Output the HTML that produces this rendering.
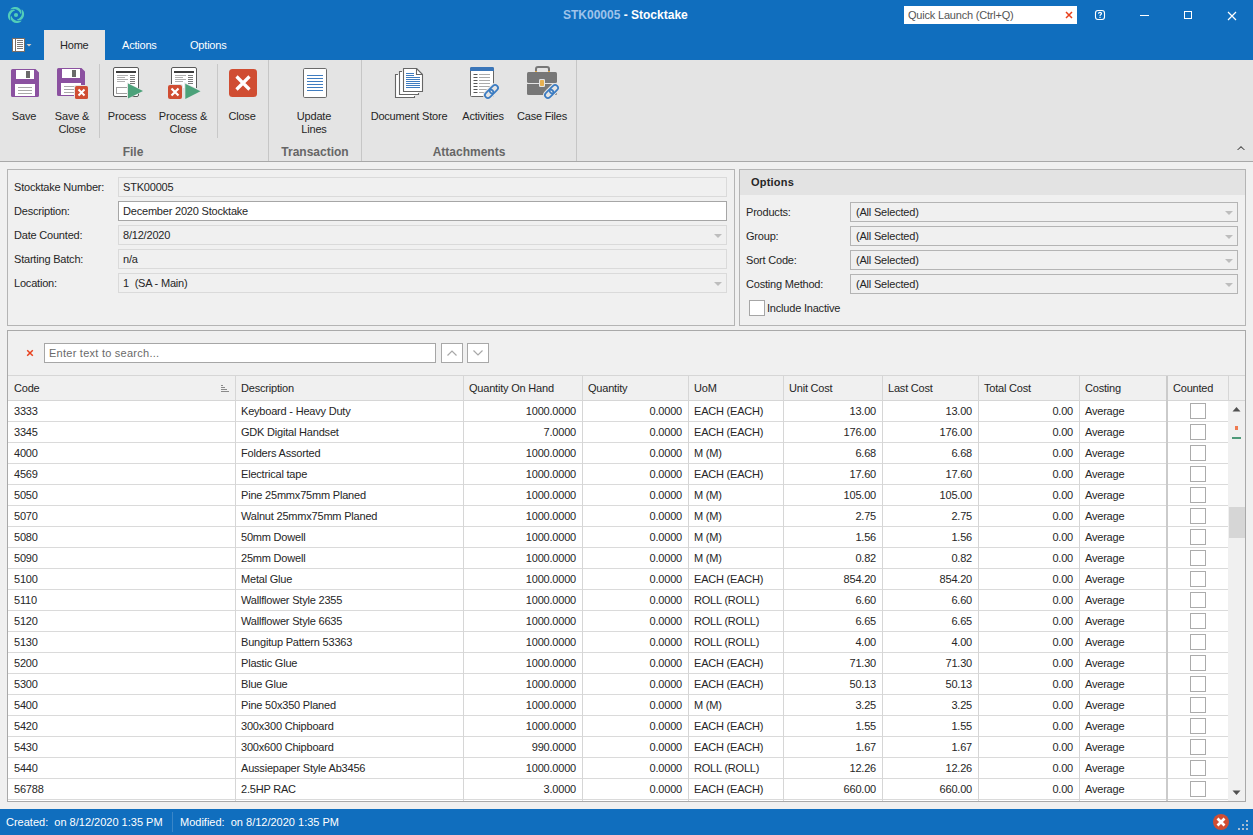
<!DOCTYPE html>
<html><head><meta charset="utf-8">
<style>
*{box-sizing:border-box;margin:0;padding:0}
html,body{width:1253px;height:835px;overflow:hidden;background:#f0f0f0;font-family:"Liberation Sans",sans-serif;font-size:11px;color:#222;letter-spacing:-0.2px}
.a{position:absolute}
.t{position:absolute;white-space:nowrap;line-height:13px}
#title{left:0;top:0;width:1253px;height:60px;background:#106ebe}
#ribbon{left:0;top:60px;width:1253px;height:102px;background:#e4e4e4;border-bottom:1px solid #a8a8a8}
.sep{position:absolute;width:1px;background:#c8c8c8}
.gdiv{position:absolute;top:60px;height:101px;width:1px;background:#c6c6c6}
.lbl{position:absolute;white-space:nowrap;line-height:13px;text-align:center;color:#262626}
.glbl{position:absolute;white-space:nowrap;line-height:14px;text-align:center;color:#666;font-weight:bold;font-size:12px;letter-spacing:0}
.box{position:absolute;height:20px;border:1px solid #dadada;background:#f0f0f0}
.dd{position:absolute;width:0;height:0;border-left:4px solid transparent;border-right:4px solid transparent;border-top:4px solid #bdbdbd}
.r{text-align:right}
.fl{position:absolute;white-space:nowrap;line-height:13px;color:#262626;margin-top:1px}
</style></head><body>
<div id="title" class="a"></div>
<!-- logo -->
<svg class="a" style="left:6px;top:5px" width="20" height="20" viewBox="0 0 20 20">
 <g fill="#52cdb9"><path d="M4.41 4.41 L4.78 3.73 L5.33 3.23 L5.95 2.81 L6.62 2.47 L7.32 2.21 L8.05 2.03 L8.79 1.93 L9.53 1.92 L10.26 1.99 L10.98 2.14 L11.66 2.36 L12.32 2.66 L12.92 3.02 L13.48 3.44 L13.97 3.92 L14.40 4.44 L14.76 4.99 L15.04 5.58 L15.25 6.18 L15.37 6.79 L15.41 7.40 L15.37 8.00 L15.22 8.58 L14.83 9.15 L14.83 9.15 L14.48 8.78 L14.29 8.40 L14.10 8.03 L13.90 7.67 L13.69 7.32 L13.45 6.97 L13.20 6.63 L12.92 6.31 L12.62 5.99 L12.28 5.69 L11.92 5.40 L11.53 5.14 L11.11 4.89 L10.66 4.66 L10.18 4.47 L9.67 4.30 L9.12 4.17 L8.55 4.08 L7.95 4.03 L7.32 4.03 L6.67 4.08 L5.99 4.18 L5.27 4.32 L4.41 4.41Z"/><path d="M15.59 4.41 L16.27 4.78 L16.77 5.33 L17.19 5.95 L17.53 6.62 L17.79 7.32 L17.97 8.05 L18.07 8.79 L18.08 9.53 L18.01 10.26 L17.86 10.98 L17.64 11.66 L17.34 12.32 L16.98 12.92 L16.56 13.48 L16.08 13.97 L15.56 14.40 L15.01 14.76 L14.42 15.04 L13.82 15.25 L13.21 15.37 L12.60 15.41 L12.00 15.37 L11.42 15.22 L10.85 14.83 L10.85 14.83 L11.22 14.48 L11.60 14.29 L11.97 14.10 L12.33 13.90 L12.68 13.69 L13.03 13.45 L13.37 13.20 L13.69 12.92 L14.01 12.62 L14.31 12.28 L14.60 11.92 L14.86 11.53 L15.11 11.11 L15.34 10.66 L15.53 10.18 L15.70 9.67 L15.83 9.12 L15.92 8.55 L15.97 7.95 L15.97 7.32 L15.92 6.67 L15.82 5.99 L15.68 5.27 L15.59 4.41Z"/><path d="M15.59 15.59 L15.22 16.27 L14.67 16.77 L14.05 17.19 L13.38 17.53 L12.68 17.79 L11.95 17.97 L11.21 18.07 L10.47 18.08 L9.74 18.01 L9.02 17.86 L8.34 17.64 L7.68 17.34 L7.08 16.98 L6.52 16.56 L6.03 16.08 L5.60 15.56 L5.24 15.01 L4.96 14.42 L4.75 13.82 L4.63 13.21 L4.59 12.60 L4.63 12.00 L4.78 11.42 L5.17 10.85 L5.17 10.85 L5.52 11.22 L5.71 11.60 L5.90 11.97 L6.10 12.33 L6.31 12.68 L6.55 13.03 L6.80 13.37 L7.08 13.69 L7.38 14.01 L7.72 14.31 L8.08 14.60 L8.47 14.86 L8.89 15.11 L9.34 15.34 L9.82 15.53 L10.33 15.70 L10.88 15.83 L11.45 15.92 L12.05 15.97 L12.68 15.97 L13.33 15.92 L14.01 15.82 L14.73 15.68 L15.59 15.59Z"/><path d="M4.41 15.59 L3.73 15.22 L3.23 14.67 L2.81 14.05 L2.47 13.38 L2.21 12.68 L2.03 11.95 L1.93 11.21 L1.92 10.47 L1.99 9.74 L2.14 9.02 L2.36 8.34 L2.66 7.68 L3.02 7.08 L3.44 6.52 L3.92 6.03 L4.44 5.60 L4.99 5.24 L5.58 4.96 L6.18 4.75 L6.79 4.63 L7.40 4.59 L8.00 4.63 L8.58 4.78 L9.15 5.17 L9.15 5.17 L8.78 5.52 L8.40 5.71 L8.03 5.90 L7.67 6.10 L7.32 6.31 L6.97 6.55 L6.63 6.80 L6.31 7.08 L5.99 7.38 L5.69 7.72 L5.40 8.08 L5.14 8.47 L4.89 8.89 L4.66 9.34 L4.47 9.82 L4.30 10.33 L4.17 10.88 L4.08 11.45 L4.03 12.05 L4.03 12.68 L4.08 13.33 L4.18 14.01 L4.32 14.73 L4.41 15.59Z"/></g>
 <circle cx="10" cy="10" r="2.1" fill="#52cdb9"/>
</svg>
<div class="t" style="left:563px;top:9px;font-size:12px;font-weight:bold;color:#9fc3ea;letter-spacing:0">STK00005 <span style="color:#fff">- Stocktake</span></div>
<!-- quick launch -->
<div class="a" style="left:904px;top:6px;width:173px;height:18px;background:#fff"></div>
<div class="t" style="left:908px;top:9px;color:#555">Quick Launch (Ctrl+Q)</div>
<svg class="a" style="left:1065px;top:11px" width="8" height="8" viewBox="0 0 8 8"><path d="M1 1L7 7M7 1L1 7" stroke="#e8401c" stroke-width="1.5"/></svg>
<!-- help -->
<svg class="a" style="left:1094px;top:9px" width="12" height="12" viewBox="0 0 12 12"><rect x="1.5" y="1.5" width="9" height="9" rx="2.5" fill="none" stroke="#fff" stroke-width="1.1"/><path d="M4.5 4.8Q4.5 3.3 6 3.3Q7.5 3.3 7.5 4.6Q7.5 5.4 6.6 5.8Q6 6.1 6 7" fill="none" stroke="#fff" stroke-width="1.2"/><rect x="5.4" y="7.8" width="1.2" height="1.2" fill="#fff"/></svg>
<div class="a" style="left:1140px;top:15px;width:9px;height:1px;background:#fff"></div>
<div class="a" style="left:1184px;top:11px;width:8px;height:8px;border:1px solid #fff"></div>
<svg class="a" style="left:1227px;top:11px" width="10" height="10" viewBox="0 0 10 10"><path d="M1 1L9 9M9 1L1 9" stroke="#fff" stroke-width="1.2"/></svg>
<!-- tabs -->
<svg class="a" style="left:12px;top:38px" width="22" height="14" viewBox="0 0 22 14"><rect x="0.5" y="0.5" width="12" height="13" fill="#fff" stroke="#7a6e66"/><rect x="3" y="1" width="1" height="12" fill="#7a6e66"/><path d="M5 2.5h6M5 4.5h6M5 6.5h6M5 8.5h6M5 10.5h6" stroke="#6e6a68" stroke-width="0.9"/><path d="M14.5 6h5l-2.5 2.5z" fill="#d8ccc4"/></svg>
<div class="a" style="left:44px;top:30px;width:61px;height:31px;background:#e4e4e4"></div>
<div class="t" style="left:60px;top:39px;color:#262626">Home</div>
<div class="t" style="left:122px;top:39px;color:#fff">Actions</div>
<div class="t" style="left:190px;top:39px;color:#fff">Options</div>

<div id="ribbon" class="a"></div>

<div class="sep" style="left:99px;top:64px;height:74px"></div>
<div class="sep" style="left:217px;top:64px;height:74px"></div>
<div class="gdiv" style="left:268px"></div>
<div class="gdiv" style="left:361px"></div>
<div class="gdiv" style="left:576px"></div>
<!-- Save -->
<svg class="a" style="left:11px;top:69px" width="28" height="28" viewBox="0 0 28 28">
 <path d="M1.5 0H24.5L28 3.5V26.5A1.5 1.5 0 0 1 26.5 28H1.5A1.5 1.5 0 0 1 0 26.5V1.5A1.5 1.5 0 0 1 1.5 0Z" fill="#8b51a0"/>
 <rect x="5" y="1" width="18" height="9" fill="#fff"/>
 <rect x="15" y="2" width="4" height="7" fill="#6a6a6a"/>
 <rect x="4" y="15" width="20" height="12" fill="#fff"/>
 <path d="M7 18.5H21M7 21.5H21M7 24.5H21" stroke="#a8a8a8" stroke-width="1"/>
</svg>
<!-- Save & Close -->
<svg class="a" style="left:57px;top:68px" width="32" height="32" viewBox="0 0 32 32">
 <path d="M1.5 0H24.5L28 3.5V26.5A1.5 1.5 0 0 1 26.5 28H1.5A1.5 1.5 0 0 1 0 26.5V1.5A1.5 1.5 0 0 1 1.5 0Z" fill="#8b51a0"/>
 <rect x="5" y="1" width="18" height="9" fill="#fff"/>
 <rect x="15" y="2" width="4" height="7" fill="#6a6a6a"/>
 <rect x="4" y="15" width="20" height="12" fill="#fff"/>
 <path d="M7 18.5H21M7 21.5H21M7 24.5H21" stroke="#a8a8a8" stroke-width="1"/>
 <rect x="17" y="17" width="15" height="15" rx="2" fill="#e4e4e4"/>
 <rect x="18" y="18" width="13" height="13" rx="1.5" fill="#d04d32"/>
 <path d="M21.5 21.5L27.5 27.5M27.5 21.5L21.5 27.5" stroke="#fff" stroke-width="2"/>
</svg>
<!-- Process -->
<svg class="a" style="left:112px;top:66px" width="34" height="34" viewBox="0 0 34 34">
 <rect x="1.5" y="1.5" width="25" height="29" rx="1.5" fill="#fff" stroke="#5a5a5a" stroke-width="1"/>
 <rect x="4" y="5" width="20" height="2" fill="#3c3c3c"/>
 <path d="M5 9.5H16M5 11.5H13M5 13.5H16M5 15.5H13" stroke="#b0b0b0" stroke-width="1"/>
 <path d="M18 9.5H23M18 11.5H23M18 13.5H23M18 15.5H23M18 17.5H23" stroke="#7a7a7a" stroke-width="1"/>
 <rect x="4.5" y="21.5" width="12" height="6" fill="#fff" stroke="#a0a0a0"/>
 <path d="M15 16.5L32 25L15 33.5Z" fill="#e4e4e4"/>
 <path d="M16 17.5L31 25L16 32.5Z" fill="#4ca27a"/>
</svg>
<!-- Process & Close -->
<svg class="a" style="left:165px;top:64px" width="38" height="38" viewBox="0 0 38 38">
 <defs><clipPath id="cp1"><rect x="0" y="0" width="38" height="24"/></clipPath></defs>
 <rect x="6.5" y="3.5" width="25" height="30" rx="1.5" fill="#fff" stroke="#5a5a5a" stroke-width="1" clip-path="url(#cp1)"/>
 <rect x="9" y="7" width="20" height="2" fill="#3c3c3c"/>
 <path d="M10 11.5H21M10 13.5H18M10 15.5H21M10 17.5H18" stroke="#b0b0b0" stroke-width="1"/>
 <path d="M23 11.5H28M23 13.5H28M23 15.5H28M23 17.5H28M23 19.5H28" stroke="#7a7a7a" stroke-width="1"/>
 <rect x="2" y="20" width="16" height="16" rx="2.5" fill="#e4e4e4"/>
 <rect x="3" y="21" width="14" height="14" rx="2" fill="#d04d32"/>
 <path d="M6.5 24.5L13.5 31.5M13.5 24.5L6.5 31.5" stroke="#fff" stroke-width="2.2"/>
 <path d="M19.3 18.3L37 27.2L19.3 36Z" fill="#e4e4e4"/>
 <path d="M20.3 19.8L35.5 27.3L20.3 35Z" fill="#4ca27a"/>
</svg>
<!-- Close -->
<svg class="a" style="left:229px;top:69px" width="28" height="28" viewBox="0 0 28 28">
 <rect x="0" y="0" width="28" height="28" rx="3.5" fill="#d04d32"/>
 <path d="M7.5 7.5L20.5 20.5M20.5 7.5L7.5 20.5" stroke="#fff" stroke-width="3.2"/>
</svg>
<!-- Update Lines -->
<svg class="a" style="left:303px;top:68px" width="24" height="30" viewBox="0 0 24 30">
 <rect x="0.5" y="0.5" width="23" height="29" rx="1.2" fill="#fff" stroke="#6a6a6a" stroke-width="1"/>
 <path d="M4 7.5H20M4 10.5H20M4 13.5H20M4 16.5H20M4 19.5H20M4 22.5H20" stroke="#3f7cc0" stroke-width="1"/>
</svg>
<!-- Document Store -->
<svg class="a" style="left:385px;top:62px" width="45" height="40" viewBox="0 0 45 40">
 <rect x="10.5" y="12.5" width="19" height="23" fill="#fff"/>
 <rect x="14.5" y="9.5" width="19" height="23" fill="#fff"/>
 <path d="M13 12.5H10.5V35.5H29.5V34" fill="none" stroke="#666" stroke-width="1.1"/>
 <path d="M17 9.5H14.5V32.5H33.5V31" fill="none" stroke="#666" stroke-width="1.1"/>
 <path d="M18.5 6.5H31.5L37.5 12.5V29.5H18.5Z" fill="#fff" stroke="#666" stroke-width="1.1" stroke-linejoin="round"/>
 <path d="M31.5 6.5V12.5H37.5" fill="none" stroke="#666" stroke-width="1.1"/>
 <path d="M21 11.5H29M21 13.5H29M21 15.5H35M21 17.5H35M21 19.5H35M21 21.5H35M21 23.5H35M21 25.5H35" stroke="#3f7cc0" stroke-width="1"/>
</svg>
<!-- Activities -->
<svg class="a" style="left:465px;top:62px" width="40" height="40" viewBox="0 0 40 40">
 <rect x="5.5" y="5.5" width="23" height="29" rx="1" fill="#fff" stroke="#666"/>
 <path d="M5 9V6.5A1.5 1.5 0 0 1 6.5 5H27.5A1.5 1.5 0 0 1 29 6.5V9Z" fill="#3a76b9"/>
 <path d="M8.5 12.5H12.5M8.5 15.5H12.5M8.5 18.5H12.5M8.5 21.5H12.5M8.5 24.5H12.5M8.5 27.5H12.5M8.5 30.5H12.5" stroke="#555" stroke-width="1"/>
 <path d="M14 12.5H25M14 15.5H25M14 18.5H25M14 21.5H25M14 24.5H25M14 27.5H25M14 30.5H25" stroke="#ababab" stroke-width="1"/>
 <g transform="translate(26.5,29.5) rotate(-45)">
  <rect x="-8" y="-2.9" width="9.5" height="5.8" rx="2.9" fill="#e4e4e4" stroke="#e4e4e4" stroke-width="4"/>
  <rect x="-1.5" y="-2.9" width="9.5" height="5.8" rx="2.9" fill="#e4e4e4" stroke="#e4e4e4" stroke-width="4"/>
  <rect x="-8" y="-2.9" width="9.5" height="5.8" rx="2.9" fill="none" stroke="#3b7cc2" stroke-width="1.7"/>
  <rect x="-1.5" y="-2.9" width="9.5" height="5.8" rx="2.9" fill="none" stroke="#3b7cc2" stroke-width="1.7"/>
 </g>
</svg>
<!-- Case Files -->
<svg class="a" style="left:520px;top:62px" width="40" height="40" viewBox="0 0 40 40">
 <path d="M16 10V7A2 2 0 0 1 18 5H27A2 2 0 0 1 29 7V10" fill="none" stroke="#777" stroke-width="2"/>
 <rect x="15" y="9" width="2" height="1" fill="#e0a848"/>
 <rect x="28" y="9" width="2" height="1" fill="#e0a848"/>
 <path d="M7 11.5A1.5 1.5 0 0 1 8.5 10H35.5A1.5 1.5 0 0 1 37 11.5V19.5A1.5 1.5 0 0 1 35.5 21H8.5A1.5 1.5 0 0 1 7 19.5Z" fill="#777"/>
 <path d="M7 22H37V31.5A1.5 1.5 0 0 1 35.5 33H8.5A1.5 1.5 0 0 1 7 31.5Z" fill="#777"/>
 <rect x="19" y="17" width="6" height="8" rx="1.2" fill="#e4e4e4"/>
 <rect x="20" y="18" width="4" height="6" rx="0.8" fill="#e6b050"/>
 <g transform="translate(31.5,29.5) rotate(-45)">
  <rect x="-8" y="-2.9" width="9.5" height="5.8" rx="2.9" fill="#e4e4e4" stroke="#e4e4e4" stroke-width="4"/>
  <rect x="-1.5" y="-2.9" width="9.5" height="5.8" rx="2.9" fill="#e4e4e4" stroke="#e4e4e4" stroke-width="4"/>
  <rect x="-8" y="-2.9" width="9.5" height="5.8" rx="2.9" fill="none" stroke="#3b7cc2" stroke-width="1.7"/>
  <rect x="-1.5" y="-2.9" width="9.5" height="5.8" rx="2.9" fill="none" stroke="#3b7cc2" stroke-width="1.7"/>
 </g>
</svg>
<!-- labels -->
<div class="lbl" style="left:-6px;top:110px;width:60px">Save</div>
<div class="lbl" style="left:42px;top:110px;width:60px">Save &amp;<br>Close</div>
<div class="lbl" style="left:97px;top:110px;width:60px">Process</div>
<div class="lbl" style="left:148px;top:110px;width:70px">Process &amp;<br>Close</div>
<div class="lbl" style="left:212px;top:110px;width:60px">Close</div>
<div class="lbl" style="left:284px;top:110px;width:60px">Update<br>Lines</div>
<div class="lbl" style="left:364px;top:110px;width:90px">Document Store</div>
<div class="lbl" style="left:453px;top:110px;width:60px">Activities</div>
<div class="lbl" style="left:512px;top:110px;width:60px">Case Files</div>
<div class="glbl" style="left:103px;top:145px;width:60px">File</div>
<div class="glbl" style="left:269px;top:145px;width:92px">Transaction</div>
<div class="glbl" style="left:419px;top:145px;width:100px">Attachments</div>
<svg class="a" style="left:1236px;top:144px" width="10" height="7" viewBox="0 0 10 7"><path d="M1 6L5 2L9 6L8 6L5 3.4L2 6Z" fill="#444"/></svg>

<!-- left form panel -->
<div class="a" style="left:7px;top:169px;width:728px;height:157px;border:1px solid #b4b4b4;background:#f0f0f0"></div>
<div class="fl" style="left:14px;top:180px">Stocktake Number:</div>
<div class="fl" style="left:14px;top:204px">Description:</div>
<div class="fl" style="left:14px;top:228px">Date Counted:</div>
<div class="fl" style="left:14px;top:252px">Starting Batch:</div>
<div class="fl" style="left:14px;top:276px">Location:</div>
<div class="box" style="left:118px;top:177px;width:609px"></div>
<div class="box" style="left:118px;top:201px;width:609px;background:#fff;border-color:#a6a6a6"></div>
<div class="box" style="left:118px;top:225px;width:609px"></div>
<div class="box" style="left:118px;top:249px;width:609px"></div>
<div class="box" style="left:118px;top:273px;width:609px"></div>
<div class="fl" style="left:123px;top:180px">STK00005</div>
<div class="fl" style="left:123px;top:204px">December 2020 Stocktake</div>
<div class="fl" style="left:123px;top:228px">8/12/2020</div>
<div class="fl" style="left:123px;top:252px">n/a</div>
<div class="fl" style="left:123px;top:276px">1&nbsp; (SA - Main)</div>
<div class="dd" style="left:714px;top:234px"></div>
<div class="dd" style="left:714px;top:282px"></div>
<!-- options panel -->
<div class="a" style="left:739px;top:169px;width:507px;height:157px;border:1px solid #b4b4b4;background:#f0f0f0"></div>
<div class="a" style="left:740px;top:170px;width:505px;height:25px;background:#e3e3e3"></div>
<div class="fl" style="left:751px;top:175px;font-weight:bold;letter-spacing:0.2px">Options</div>
<div class="fl" style="left:746px;top:205px">Products:</div>
<div class="fl" style="left:746px;top:229px">Group:</div>
<div class="fl" style="left:746px;top:253px">Sort Code:</div>
<div class="fl" style="left:746px;top:277px">Costing Method:</div>
<div class="box" style="left:850px;top:202px;width:388px;border-color:#b4b4b4"></div>
<div class="box" style="left:850px;top:226px;width:388px;border-color:#b4b4b4"></div>
<div class="box" style="left:850px;top:250px;width:388px;border-color:#b4b4b4"></div>
<div class="box" style="left:850px;top:274px;width:388px;border-color:#b4b4b4"></div>
<div class="fl" style="left:856px;top:205px">(All Selected)</div>
<div class="fl" style="left:856px;top:229px">(All Selected)</div>
<div class="fl" style="left:856px;top:253px">(All Selected)</div>
<div class="fl" style="left:856px;top:277px">(All Selected)</div>
<div class="dd" style="left:1225px;top:211px"></div>
<div class="dd" style="left:1225px;top:235px"></div>
<div class="dd" style="left:1225px;top:259px"></div>
<div class="dd" style="left:1225px;top:283px"></div>
<div class="a" style="left:749px;top:300px;width:16px;height:16px;border:1px solid #a6a6a6;background:#fff"></div>
<div class="fl" style="left:767px;top:301px">Include Inactive</div>
<div class="a" style="left:7px;top:330px;width:1239px;height:472px;border:1px solid #a9a9a9;background:#f0f0f0"></div>
<svg class="a" style="left:26px;top:349px" width="8" height="8" viewBox="0 0 8 8"><path d="M1.2 1.2L6.8 6.8M6.8 1.2L1.2 6.8" stroke="#e8401c" stroke-width="1.5"/></svg>
<div class="a" style="left:44px;top:343px;width:392px;height:20px;border:1px solid #a6a6a6;background:#fff"></div>
<div class="fl" style="left:49px;top:346px;color:#6a6a6a;letter-spacing:0.25px">Enter text to search...</div>
<div class="a" style="left:441px;top:343px;width:22px;height:20px;border:1px solid #a8a8a8;background:#fff"></div>
<div class="a" style="left:467px;top:343px;width:22px;height:20px;border:1px solid #a8a8a8;background:#fff"></div>
<svg class="a" style="left:446px;top:348px" width="12" height="10" viewBox="0 0 12 10"><path d="M1.5 7.5L6 3L10.5 7.5" fill="none" stroke="#a8a8a8" stroke-width="1.2"/></svg>
<svg class="a" style="left:472px;top:348px" width="12" height="10" viewBox="0 0 12 10"><path d="M1.5 2.5L6 7L10.5 2.5" fill="none" stroke="#a8a8a8" stroke-width="1.2"/></svg>
<div class="a" style="left:8px;top:375px;width:1237px;height:1px;background:#d6d6d6"></div>
<div class="a" style="left:8px;top:400px;width:1237px;height:1px;background:#d6d6d6"></div>
<div class="a" style="left:8px;top:401px;width:1220px;height:400px;background:#fff"></div>
<div class="a" style="left:1228px;top:401px;width:17px;height:400px;background:#f0f0f0"></div>
<div class="a" style="left:8px;top:421px;width:1220px;height:1px;background:#dadada"></div>
<div class="a" style="left:8px;top:442px;width:1220px;height:1px;background:#dadada"></div>
<div class="a" style="left:8px;top:463px;width:1220px;height:1px;background:#dadada"></div>
<div class="a" style="left:8px;top:484px;width:1220px;height:1px;background:#dadada"></div>
<div class="a" style="left:8px;top:505px;width:1220px;height:1px;background:#dadada"></div>
<div class="a" style="left:8px;top:526px;width:1220px;height:1px;background:#dadada"></div>
<div class="a" style="left:8px;top:547px;width:1220px;height:1px;background:#dadada"></div>
<div class="a" style="left:8px;top:568px;width:1220px;height:1px;background:#dadada"></div>
<div class="a" style="left:8px;top:589px;width:1220px;height:1px;background:#dadada"></div>
<div class="a" style="left:8px;top:610px;width:1220px;height:1px;background:#dadada"></div>
<div class="a" style="left:8px;top:631px;width:1220px;height:1px;background:#dadada"></div>
<div class="a" style="left:8px;top:652px;width:1220px;height:1px;background:#dadada"></div>
<div class="a" style="left:8px;top:673px;width:1220px;height:1px;background:#dadada"></div>
<div class="a" style="left:8px;top:694px;width:1220px;height:1px;background:#dadada"></div>
<div class="a" style="left:8px;top:715px;width:1220px;height:1px;background:#dadada"></div>
<div class="a" style="left:8px;top:736px;width:1220px;height:1px;background:#dadada"></div>
<div class="a" style="left:8px;top:757px;width:1220px;height:1px;background:#dadada"></div>
<div class="a" style="left:8px;top:778px;width:1220px;height:1px;background:#dadada"></div>
<div class="a" style="left:8px;top:799px;width:1220px;height:1px;background:#dadada"></div>
<div class="a" style="left:235px;top:376px;width:1px;height:425px;background:#d6d6d6"></div>
<div class="a" style="left:463px;top:376px;width:1px;height:425px;background:#d6d6d6"></div>
<div class="a" style="left:582px;top:376px;width:1px;height:425px;background:#d6d6d6"></div>
<div class="a" style="left:688px;top:376px;width:1px;height:425px;background:#d6d6d6"></div>
<div class="a" style="left:783px;top:376px;width:1px;height:425px;background:#d6d6d6"></div>
<div class="a" style="left:882px;top:376px;width:1px;height:425px;background:#d6d6d6"></div>
<div class="a" style="left:978px;top:376px;width:1px;height:425px;background:#d6d6d6"></div>
<div class="a" style="left:1079px;top:376px;width:1px;height:425px;background:#d6d6d6"></div>
<div class="a" style="left:1166px;top:376px;width:2px;height:425px;background:#cbcbcb"></div>
<div class="a" style="left:1228px;top:376px;width:1px;height:25px;background:#d6d6d6"></div>
<div class="fl" style="left:14px;top:381px">Code</div>
<div class="fl" style="left:241px;top:381px">Description</div>
<div class="fl" style="left:469px;top:381px">Quantity On Hand</div>
<div class="fl" style="left:588px;top:381px">Quantity</div>
<div class="fl" style="left:694px;top:381px">UoM</div>
<div class="fl" style="left:789px;top:381px">Unit Cost</div>
<div class="fl" style="left:888px;top:381px">Last Cost</div>
<div class="fl" style="left:984px;top:381px">Total Cost</div>
<div class="fl" style="left:1085px;top:381px">Costing</div>
<div class="fl" style="left:1173px;top:381px">Counted</div>
<svg class="a" style="left:220px;top:384px" width="10" height="9" viewBox="0 0 10 9"><path d="M1 1.5H3M1 3.5H5M1 5.5H7M1 7.5H9" stroke="#8a8a8a" stroke-width="1"/></svg>
<div class="fl" style="left:14px;top:404px">3333</div>
<div class="fl" style="left:241px;top:404px">Keyboard - Heavy Duty</div>
<div class="fl r" style="left:464px;width:112px;top:404px">1000.0000</div>
<div class="fl r" style="left:583px;width:99px;top:404px">0.0000</div>
<div class="fl" style="left:694px;top:404px">EACH (EACH)</div>
<div class="fl r" style="left:784px;width:92px;top:404px">13.00</div>
<div class="fl r" style="left:883px;width:89px;top:404px">13.00</div>
<div class="fl r" style="left:979px;width:94px;top:404px">0.00</div>
<div class="fl" style="left:1085px;top:404px">Average</div>
<div class="a" style="left:1190px;top:403px;width:16px;height:16px;border:1px solid #ababab;background:#fff"></div>
<div class="fl" style="left:14px;top:425px">3345</div>
<div class="fl" style="left:241px;top:425px">GDK Digital Handset</div>
<div class="fl r" style="left:464px;width:112px;top:425px">7.0000</div>
<div class="fl r" style="left:583px;width:99px;top:425px">0.0000</div>
<div class="fl" style="left:694px;top:425px">EACH (EACH)</div>
<div class="fl r" style="left:784px;width:92px;top:425px">176.00</div>
<div class="fl r" style="left:883px;width:89px;top:425px">176.00</div>
<div class="fl r" style="left:979px;width:94px;top:425px">0.00</div>
<div class="fl" style="left:1085px;top:425px">Average</div>
<div class="a" style="left:1190px;top:424px;width:16px;height:16px;border:1px solid #ababab;background:#fff"></div>
<div class="fl" style="left:14px;top:446px">4000</div>
<div class="fl" style="left:241px;top:446px">Folders Assorted</div>
<div class="fl r" style="left:464px;width:112px;top:446px">1000.0000</div>
<div class="fl r" style="left:583px;width:99px;top:446px">0.0000</div>
<div class="fl" style="left:694px;top:446px">M (M)</div>
<div class="fl r" style="left:784px;width:92px;top:446px">6.68</div>
<div class="fl r" style="left:883px;width:89px;top:446px">6.68</div>
<div class="fl r" style="left:979px;width:94px;top:446px">0.00</div>
<div class="fl" style="left:1085px;top:446px">Average</div>
<div class="a" style="left:1190px;top:445px;width:16px;height:16px;border:1px solid #ababab;background:#fff"></div>
<div class="fl" style="left:14px;top:467px">4569</div>
<div class="fl" style="left:241px;top:467px">Electrical tape</div>
<div class="fl r" style="left:464px;width:112px;top:467px">1000.0000</div>
<div class="fl r" style="left:583px;width:99px;top:467px">0.0000</div>
<div class="fl" style="left:694px;top:467px">EACH (EACH)</div>
<div class="fl r" style="left:784px;width:92px;top:467px">17.60</div>
<div class="fl r" style="left:883px;width:89px;top:467px">17.60</div>
<div class="fl r" style="left:979px;width:94px;top:467px">0.00</div>
<div class="fl" style="left:1085px;top:467px">Average</div>
<div class="a" style="left:1190px;top:466px;width:16px;height:16px;border:1px solid #ababab;background:#fff"></div>
<div class="fl" style="left:14px;top:488px">5050</div>
<div class="fl" style="left:241px;top:488px">Pine 25mmx75mm Planed</div>
<div class="fl r" style="left:464px;width:112px;top:488px">1000.0000</div>
<div class="fl r" style="left:583px;width:99px;top:488px">0.0000</div>
<div class="fl" style="left:694px;top:488px">M (M)</div>
<div class="fl r" style="left:784px;width:92px;top:488px">105.00</div>
<div class="fl r" style="left:883px;width:89px;top:488px">105.00</div>
<div class="fl r" style="left:979px;width:94px;top:488px">0.00</div>
<div class="fl" style="left:1085px;top:488px">Average</div>
<div class="a" style="left:1190px;top:487px;width:16px;height:16px;border:1px solid #ababab;background:#fff"></div>
<div class="fl" style="left:14px;top:509px">5070</div>
<div class="fl" style="left:241px;top:509px">Walnut 25mmx75mm Planed</div>
<div class="fl r" style="left:464px;width:112px;top:509px">1000.0000</div>
<div class="fl r" style="left:583px;width:99px;top:509px">0.0000</div>
<div class="fl" style="left:694px;top:509px">M (M)</div>
<div class="fl r" style="left:784px;width:92px;top:509px">2.75</div>
<div class="fl r" style="left:883px;width:89px;top:509px">2.75</div>
<div class="fl r" style="left:979px;width:94px;top:509px">0.00</div>
<div class="fl" style="left:1085px;top:509px">Average</div>
<div class="a" style="left:1190px;top:508px;width:16px;height:16px;border:1px solid #ababab;background:#fff"></div>
<div class="fl" style="left:14px;top:530px">5080</div>
<div class="fl" style="left:241px;top:530px">50mm Dowell</div>
<div class="fl r" style="left:464px;width:112px;top:530px">1000.0000</div>
<div class="fl r" style="left:583px;width:99px;top:530px">0.0000</div>
<div class="fl" style="left:694px;top:530px">M (M)</div>
<div class="fl r" style="left:784px;width:92px;top:530px">1.56</div>
<div class="fl r" style="left:883px;width:89px;top:530px">1.56</div>
<div class="fl r" style="left:979px;width:94px;top:530px">0.00</div>
<div class="fl" style="left:1085px;top:530px">Average</div>
<div class="a" style="left:1190px;top:529px;width:16px;height:16px;border:1px solid #ababab;background:#fff"></div>
<div class="fl" style="left:14px;top:551px">5090</div>
<div class="fl" style="left:241px;top:551px">25mm Dowell</div>
<div class="fl r" style="left:464px;width:112px;top:551px">1000.0000</div>
<div class="fl r" style="left:583px;width:99px;top:551px">0.0000</div>
<div class="fl" style="left:694px;top:551px">M (M)</div>
<div class="fl r" style="left:784px;width:92px;top:551px">0.82</div>
<div class="fl r" style="left:883px;width:89px;top:551px">0.82</div>
<div class="fl r" style="left:979px;width:94px;top:551px">0.00</div>
<div class="fl" style="left:1085px;top:551px">Average</div>
<div class="a" style="left:1190px;top:550px;width:16px;height:16px;border:1px solid #ababab;background:#fff"></div>
<div class="fl" style="left:14px;top:572px">5100</div>
<div class="fl" style="left:241px;top:572px">Metal Glue</div>
<div class="fl r" style="left:464px;width:112px;top:572px">1000.0000</div>
<div class="fl r" style="left:583px;width:99px;top:572px">0.0000</div>
<div class="fl" style="left:694px;top:572px">EACH (EACH)</div>
<div class="fl r" style="left:784px;width:92px;top:572px">854.20</div>
<div class="fl r" style="left:883px;width:89px;top:572px">854.20</div>
<div class="fl r" style="left:979px;width:94px;top:572px">0.00</div>
<div class="fl" style="left:1085px;top:572px">Average</div>
<div class="a" style="left:1190px;top:571px;width:16px;height:16px;border:1px solid #ababab;background:#fff"></div>
<div class="fl" style="left:14px;top:593px">5110</div>
<div class="fl" style="left:241px;top:593px">Wallflower Style 2355</div>
<div class="fl r" style="left:464px;width:112px;top:593px">1000.0000</div>
<div class="fl r" style="left:583px;width:99px;top:593px">0.0000</div>
<div class="fl" style="left:694px;top:593px">ROLL (ROLL)</div>
<div class="fl r" style="left:784px;width:92px;top:593px">6.60</div>
<div class="fl r" style="left:883px;width:89px;top:593px">6.60</div>
<div class="fl r" style="left:979px;width:94px;top:593px">0.00</div>
<div class="fl" style="left:1085px;top:593px">Average</div>
<div class="a" style="left:1190px;top:592px;width:16px;height:16px;border:1px solid #ababab;background:#fff"></div>
<div class="fl" style="left:14px;top:614px">5120</div>
<div class="fl" style="left:241px;top:614px">Wallflower Style 6635</div>
<div class="fl r" style="left:464px;width:112px;top:614px">1000.0000</div>
<div class="fl r" style="left:583px;width:99px;top:614px">0.0000</div>
<div class="fl" style="left:694px;top:614px">ROLL (ROLL)</div>
<div class="fl r" style="left:784px;width:92px;top:614px">6.65</div>
<div class="fl r" style="left:883px;width:89px;top:614px">6.65</div>
<div class="fl r" style="left:979px;width:94px;top:614px">0.00</div>
<div class="fl" style="left:1085px;top:614px">Average</div>
<div class="a" style="left:1190px;top:613px;width:16px;height:16px;border:1px solid #ababab;background:#fff"></div>
<div class="fl" style="left:14px;top:635px">5130</div>
<div class="fl" style="left:241px;top:635px">Bungitup Pattern 53363</div>
<div class="fl r" style="left:464px;width:112px;top:635px">1000.0000</div>
<div class="fl r" style="left:583px;width:99px;top:635px">0.0000</div>
<div class="fl" style="left:694px;top:635px">ROLL (ROLL)</div>
<div class="fl r" style="left:784px;width:92px;top:635px">4.00</div>
<div class="fl r" style="left:883px;width:89px;top:635px">4.00</div>
<div class="fl r" style="left:979px;width:94px;top:635px">0.00</div>
<div class="fl" style="left:1085px;top:635px">Average</div>
<div class="a" style="left:1190px;top:634px;width:16px;height:16px;border:1px solid #ababab;background:#fff"></div>
<div class="fl" style="left:14px;top:656px">5200</div>
<div class="fl" style="left:241px;top:656px">Plastic Glue</div>
<div class="fl r" style="left:464px;width:112px;top:656px">1000.0000</div>
<div class="fl r" style="left:583px;width:99px;top:656px">0.0000</div>
<div class="fl" style="left:694px;top:656px">EACH (EACH)</div>
<div class="fl r" style="left:784px;width:92px;top:656px">71.30</div>
<div class="fl r" style="left:883px;width:89px;top:656px">71.30</div>
<div class="fl r" style="left:979px;width:94px;top:656px">0.00</div>
<div class="fl" style="left:1085px;top:656px">Average</div>
<div class="a" style="left:1190px;top:655px;width:16px;height:16px;border:1px solid #ababab;background:#fff"></div>
<div class="fl" style="left:14px;top:677px">5300</div>
<div class="fl" style="left:241px;top:677px">Blue Glue</div>
<div class="fl r" style="left:464px;width:112px;top:677px">1000.0000</div>
<div class="fl r" style="left:583px;width:99px;top:677px">0.0000</div>
<div class="fl" style="left:694px;top:677px">EACH (EACH)</div>
<div class="fl r" style="left:784px;width:92px;top:677px">50.13</div>
<div class="fl r" style="left:883px;width:89px;top:677px">50.13</div>
<div class="fl r" style="left:979px;width:94px;top:677px">0.00</div>
<div class="fl" style="left:1085px;top:677px">Average</div>
<div class="a" style="left:1190px;top:676px;width:16px;height:16px;border:1px solid #ababab;background:#fff"></div>
<div class="fl" style="left:14px;top:698px">5400</div>
<div class="fl" style="left:241px;top:698px">Pine 50x350 Planed</div>
<div class="fl r" style="left:464px;width:112px;top:698px">1000.0000</div>
<div class="fl r" style="left:583px;width:99px;top:698px">0.0000</div>
<div class="fl" style="left:694px;top:698px">M (M)</div>
<div class="fl r" style="left:784px;width:92px;top:698px">3.25</div>
<div class="fl r" style="left:883px;width:89px;top:698px">3.25</div>
<div class="fl r" style="left:979px;width:94px;top:698px">0.00</div>
<div class="fl" style="left:1085px;top:698px">Average</div>
<div class="a" style="left:1190px;top:697px;width:16px;height:16px;border:1px solid #ababab;background:#fff"></div>
<div class="fl" style="left:14px;top:719px">5420</div>
<div class="fl" style="left:241px;top:719px">300x300 Chipboard</div>
<div class="fl r" style="left:464px;width:112px;top:719px">1000.0000</div>
<div class="fl r" style="left:583px;width:99px;top:719px">0.0000</div>
<div class="fl" style="left:694px;top:719px">EACH (EACH)</div>
<div class="fl r" style="left:784px;width:92px;top:719px">1.55</div>
<div class="fl r" style="left:883px;width:89px;top:719px">1.55</div>
<div class="fl r" style="left:979px;width:94px;top:719px">0.00</div>
<div class="fl" style="left:1085px;top:719px">Average</div>
<div class="a" style="left:1190px;top:718px;width:16px;height:16px;border:1px solid #ababab;background:#fff"></div>
<div class="fl" style="left:14px;top:740px">5430</div>
<div class="fl" style="left:241px;top:740px">300x600 Chipboard</div>
<div class="fl r" style="left:464px;width:112px;top:740px">990.0000</div>
<div class="fl r" style="left:583px;width:99px;top:740px">0.0000</div>
<div class="fl" style="left:694px;top:740px">EACH (EACH)</div>
<div class="fl r" style="left:784px;width:92px;top:740px">1.67</div>
<div class="fl r" style="left:883px;width:89px;top:740px">1.67</div>
<div class="fl r" style="left:979px;width:94px;top:740px">0.00</div>
<div class="fl" style="left:1085px;top:740px">Average</div>
<div class="a" style="left:1190px;top:739px;width:16px;height:16px;border:1px solid #ababab;background:#fff"></div>
<div class="fl" style="left:14px;top:761px">5440</div>
<div class="fl" style="left:241px;top:761px">Aussiepaper Style Ab3456</div>
<div class="fl r" style="left:464px;width:112px;top:761px">1000.0000</div>
<div class="fl r" style="left:583px;width:99px;top:761px">0.0000</div>
<div class="fl" style="left:694px;top:761px">ROLL (ROLL)</div>
<div class="fl r" style="left:784px;width:92px;top:761px">12.26</div>
<div class="fl r" style="left:883px;width:89px;top:761px">12.26</div>
<div class="fl r" style="left:979px;width:94px;top:761px">0.00</div>
<div class="fl" style="left:1085px;top:761px">Average</div>
<div class="a" style="left:1190px;top:760px;width:16px;height:16px;border:1px solid #ababab;background:#fff"></div>
<div class="fl" style="left:14px;top:782px">56788</div>
<div class="fl" style="left:241px;top:782px">2.5HP RAC</div>
<div class="fl r" style="left:464px;width:112px;top:782px">3.0000</div>
<div class="fl r" style="left:583px;width:99px;top:782px">0.0000</div>
<div class="fl" style="left:694px;top:782px">EACH (EACH)</div>
<div class="fl r" style="left:784px;width:92px;top:782px">660.00</div>
<div class="fl r" style="left:883px;width:89px;top:782px">660.00</div>
<div class="fl r" style="left:979px;width:94px;top:782px">0.00</div>
<div class="fl" style="left:1085px;top:782px">Average</div>
<div class="a" style="left:1190px;top:781px;width:16px;height:16px;border:1px solid #ababab;background:#fff"></div>
<svg class="a" style="left:1232px;top:406px" width="9" height="6" viewBox="0 0 9 6"><path d="M0.5 5.5L4.5 1L8.5 5.5Z" fill="#505050"/></svg>
<div class="a" style="left:1235px;top:426px;width:3px;height:4px;background:#ef7a50"></div>
<div class="a" style="left:1232px;top:437px;width:9px;height:2px;background:#4f9a7a"></div>
<div class="a" style="left:1229px;top:507px;width:16px;height:31px;background:#d6d6d6"></div>
<svg class="a" style="left:1232px;top:790px" width="9" height="6" viewBox="0 0 9 6"><path d="M0.5 0.5L4.5 5L8.5 0.5Z" fill="#505050"/></svg>
<div class="a" style="left:0;top:809px;width:1253px;height:26px;background:#106ebe"></div>
<div class="t" style="left:6px;top:816px;color:#fff;letter-spacing:0">Created:&nbsp; on 8/12/2020 1:35 PM</div>
<div class="a" style="left:172px;top:812px;width:1px;height:20px;background:#3a86c8"></div>
<div class="t" style="left:180px;top:816px;color:#fff;letter-spacing:0">Modified:&nbsp; on 8/12/2020 1:35 PM</div>
<svg class="a" style="left:1212px;top:813px" width="18" height="18" viewBox="0 0 18 18"><circle cx="9" cy="9" r="8" fill="#d04d32"/><path d="M5.5 5.5L12.5 12.5M12.5 5.5L5.5 12.5" stroke="#fff" stroke-width="2.7"/></svg>
<svg class="a" style="left:1238px;top:820px" width="12" height="12" viewBox="0 0 12 12"><g fill="#a9bdd2"><rect x="8" y="0" width="2" height="2"/><rect x="4" y="4" width="2" height="2"/><rect x="8" y="4" width="2" height="2"/><rect x="0" y="8" width="2" height="2"/><rect x="4" y="8" width="2" height="2"/><rect x="8" y="8" width="2" height="2"/></g></svg>
</body></html>
